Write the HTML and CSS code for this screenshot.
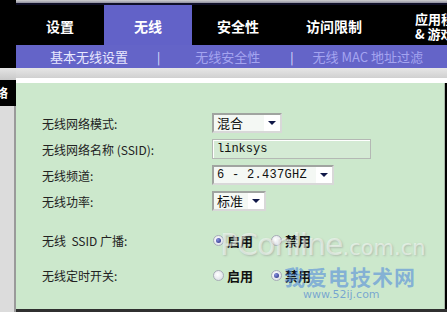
FILE: index.html
```html
<!DOCTYPE html>
<html lang="zh-CN">
<head>
    <meta charset="UTF-8">
    <title>无线</title>
    <link rel="stylesheet" href="styles.css">
</head>
<body>
    <div class="page">
        <div class="side">
            <div class="side-top"></div>
            <div class="side-grey"></div>
            <div class="side-label">络</div>
            <div class="side-rest"></div>
        </div>
        <div class="main">
            <div class="topline"></div>
            <div class="tabs">
                <div class="tab t1">设置</div>
                <div class="tab t2 active">无线</div>
                <div class="tab t3">安全性</div>
                <div class="tab t4">访问限制</div>
                <div class="tab t5">应用程序<br>&amp; 游戏</div>
            </div>
            <div class="subnav">
                <span class="sub s1">基本无线设置</span>
                <span class="sep p1">|</span>
                <span class="sub s2">无线安全性</span>
                <span class="sep p2">|</span>
                <span class="sub s3">无线 MAC 地址过滤</span>
            </div>
            <div class="greybar"></div>
            <div class="whitebar"></div>
            <div class="content">
                <div class="row">
                    <div class="label">无线网络模式:</div>
                    <div class="select w-mode"><span class="val">混合</span><span class="btn"><i></i></span></div>
                </div>
                <div class="row">
                    <div class="label">无线网络名称 (SSID):</div>
                    <div class="field">linksys</div>
                </div>
                <div class="row">
                    <div class="label">无线频道:</div>
                    <div class="select w-chan"><span class="val mono">6 - 2.437GHZ</span><span class="btn"><i></i></span></div>
                </div>
                <div class="row">
                    <div class="label">无线功率:</div>
                    <div class="select w-power"><span class="val">标准</span><span class="btn"><i></i></span></div>
                </div>
                <div class="row gap1">
                    <div class="label">无线&nbsp; SSID 广播:</div>
                    <div class="radios">
                        <span class="radio on"></span><b>启用</b>
                        <span class="radio"></span><b>禁用</b>
                    </div>
                </div>
                <div class="row gap2">
                    <div class="label">无线定时开关:</div>
                    <div class="radios">
                        <span class="radio"></span><b>启用</b>
                        <span class="radio on"></span><b>禁用</b>
                    </div>
                </div>

                <!-- watermark of the source site -->
                <div class="mark">
                    <div class="mark-big">PConline<small>.com.cn</small></div>
                    <div class="mark-cn">我爱电技术网</div>
                    <div class="mark-url">www.52ij.com</div>
                </div>
            </div>
            <div class="bottomline"></div>
        </div>
    </div>
</body>
</html>
```

FILE: styles.css
```css
body {
    margin: 0;
    background: #000;
    font-family: "Noto Sans CJK SC", "DejaVu Sans", sans-serif;
}
.page {
    display: flex;
    width: 447px;
    height: 312px;
    overflow: hidden;
}
.side {
    width: 16px;
    display: flex;
    flex-direction: column;
}
.side-top {
    height: 68px;
    background: #000;
}
.side-grey {
    height: 12px;
    background: linear-gradient(#e4e4e4, #c8c8c8);
}
.side-label {
    height: 26px;
    background: #000;
    color: #fff;
    font-size: 12px;
    font-weight: bold;
    line-height: 26px;
    text-indent: -4px;
}
.side-rest {
    flex: 1;
    background: #dcdcdc;
    border-right: 2px solid #9a9a9a;
}
.main {
    flex: 1;
    display: flex;
    flex-direction: column;
    position: relative;
    min-width: 0;
}
.topline {
    height: 3px;
    background: linear-gradient(#d0d0d0, #9090a0);
}
.tabs {
    height: 42px;
    display: flex;
    background: #000;
    border-top: 2px solid #101028;
    box-sizing: border-box;
    overflow: hidden;
}
.tab {
    color: #fff;
    font-weight: bold;
    font-size: 14px;
    display: flex;
    align-items: center;
    justify-content: center;
    padding-top: 2px;
    flex-shrink: 0;
}
.tab.active {
    background: #6262c8;
    margin-top: -2px;
    padding-top: 4px;
}
.t1 { width: 88px; }
.t2 { width: 88px; }
.t3 { width: 92px; }
.t4 { width: 100px; }
.t5 {
    width: 80px;
    justify-content: flex-start;
    padding-left: 31px;
    font-size: 13px;
    line-height: 15px;
    white-space: nowrap;
}
.subnav {
    height: 23px;
    background: #6464c8;
    display: flex;
    align-items: center;
    font-size: 13px;
    color: #a4a4f0;
    white-space: nowrap;
}
.s1 {
    padding-left: 34px;
    color: #e8e8ff;
}
.sep {
    color: #e0e0ff;
    font-size: 12px;
}
.p1 { padding-left: 29px; }
.s2 { padding-left: 35px; }
.p2 { padding-left: 30px; }
.s3 { padding-left: 19px; }
.greybar {
    height: 10px;
    background: linear-gradient(#e6e6e6, #d0d0d0);
}
.whitebar {
    height: 5px;
    background: #fff;
}
.content {
    flex: 1;
    background: #cce8cc;
    border-right: 1px solid #a8b8a8;
    margin-right: 2px;
    padding-top: 27px;
    position: relative;
}
.bottomline {
    height: 3px;
    background: #303030;
}
.row {
    display: flex;
    align-items: center;
    height: 26px;
}
.gap1 {
    margin-top: 13px;
}
.gap2 {
    margin-top: 9px;
}
.label {
    width: 170px;
    padding-left: 26px;
    font-size: 12px;
    color: #222;
    white-space: nowrap;
}
.select {
    height: 20px;
    box-sizing: border-box;
    border: 2px solid #a0a4a0;
    border-right-color: #d8d8d8;
    border-bottom-color: #d8d8d8;
    background: #f4f8f4;
    display: flex;
    align-items: center;
}
.select .val {
    flex: 1;
    font-size: 13px;
    color: #111;
    padding-left: 3px;
    line-height: 16px;
}
.select .mono {
    font-family: "Liberation Mono", monospace;
    font-size: 12px;
    letter-spacing: 0.3px;
}
.select .btn {
    width: 16px;
    height: 16px;
    background: #fff;
    display: flex;
    align-items: center;
    justify-content: center;
}
.select .btn i {
    width: 0;
    height: 0;
    border-left: 4px solid transparent;
    border-right: 4px solid transparent;
    border-top: 4px solid #101848;
}
.w-mode { width: 70px; }
.w-chan { width: 122px; }
.w-power { width: 54px; }
.field {
    width: 159px;
    height: 20px;
    box-sizing: border-box;
    border: 1px solid #b4b8b4;
    box-shadow: inset 1px 1px 0 #fff;
    background: #d4ead4;
    font-family: "Liberation Mono", monospace;
    font-size: 12px;
    color: #111;
    padding-left: 4px;
    line-height: 18px;
}
.radios {
    display: flex;
    align-items: center;
    font-size: 13px;
    color: #111;
}
.radios b {
    margin-left: 3px;
    margin-right: 17px;
}
.radio {
    width: 9px;
    height: 9px;
    margin-left: 1px;
    border-radius: 50%;
    border: 1px solid #a8acb8;
    background: radial-gradient(circle at 40% 40%, #fff, #d4d8e0);
    position: relative;
}
.radio.on::after {
    content: "";
    position: absolute;
    left: 2px;
    top: 2px;
    width: 5px;
    height: 5px;
    border-radius: 50%;
    background: radial-gradient(circle at 35% 35%, #8890e0, #202878);
}
.mark {
    position: absolute;
    left: 204px;
    top: 146px;
    width: 220px;
    pointer-events: none;
}
.mark-big {
    font-family: "DejaVu Sans", sans-serif;
    font-size: 30px;
    color: rgba(255, 255, 255, 0.5);
    letter-spacing: -1px;
    line-height: 32px;
    text-shadow: 1px 1px 2px rgba(140, 140, 140, 0.45);
}
.mark-big small {
    font-size: 21px;
    letter-spacing: 0;
}
.mark-cn {
    font-size: 21px;
    font-weight: bold;
    color: rgba(70, 130, 220, 0.55);
    line-height: 24px;
    padding-left: 64px;
    letter-spacing: 1px;
}
.mark-url {
    font-family: "DejaVu Sans", sans-serif;
    font-size: 11px;
    color: rgba(60, 120, 210, 0.6);
    line-height: 13px;
    padding-left: 83px;
}
```
